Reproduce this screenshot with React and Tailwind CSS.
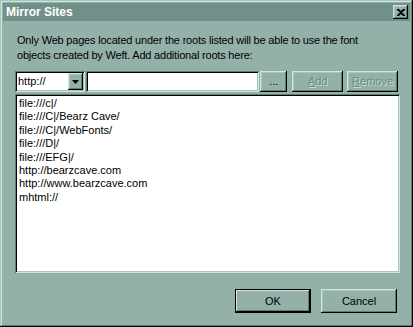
import React from 'react';

const raised = 'shadow-[inset_-1px_-1px_#000,inset_1px_1px_#d3e3de,inset_-2px_-2px_#5e7d75,inset_2px_2px_#a9c4bc]';
const sunken = 'shadow-[inset_1px_1px_#5e7d75,inset_-1px_-1px_#d3e3de,inset_2px_2px_#000,inset_-2px_-2px_#a9c4bc]';

const sites = [
    'file:///c|/',
    'file:///C|/Bearz Cave/',
    'file:///C|/WebFonts/',
    'file:///D|/',
    'file:///EFG|/',
    'http://bearzcave.com',
    'http://www.bearzcave.com',
    'mhtml://',
];

const Btn = ({ children, className = '', disabled }) => (
    <div
        className={`flex items-center justify-center bg-[#93b1a9] ${raised} ${disabled ? 'text-[#6a8a82] [text-shadow:1px_1px_#c9dcd6]' : 'text-black'} ${className}`}
    >
        {children}
    </div>
);

export default function App() {
    return (
        <div
            className="w-[413px] h-[327px] bg-[#93b1a9] flex flex-col p-[3px] shadow-[inset_-1px_-1px_#000,inset_1px_1px_#a9c4bc,inset_-2px_-2px_#5e7d75,inset_2px_2px_#d3e3de] text-[11px] text-black"
            style={{ fontFamily: '"Liberation Sans", Arial, sans-serif' }}
        >
            <div className="h-[18px] bg-[#6f9189] flex items-center justify-between pl-[3px] pr-[2px]">
                <span className="text-white font-bold text-[12px]">Mirror Sites</span>
                <div className={`w-[15px] h-[14px] flex items-center justify-center bg-[#93b1a9] ${raised}`}>
                    <svg width="8" height="7" viewBox="0 0 8 7">
                        <path d="M0 0h2l2 2 2-2h2v1L5 3.5 8 6v1H6L4 5 2 7H0V6l3-2.5L0 1z" fill="#000" />
                    </svg>
                </div>
            </div>

            <div className="flex-1 flex flex-col px-[12px] pt-[12px] pb-[11px]">
                <p className="leading-[15px] pl-[2px] tracking-[-0.2px]">
                    Only Web pages located under the roots listed will be able to use the font
                    <br />
                    objects created by Weft. Add additional roots here:
                </p>

                <div className="flex items-stretch h-[21px] mt-[8px]">
                    <div className={`w-[70px] bg-white flex items-center pl-[3px] pr-[2px] ${sunken}`}>
                        <span className="flex-1">http://</span>
                        <Btn className="w-[15px] h-[17px]">
                            <svg width="7" height="4" viewBox="0 0 7 4">
                                <path d="M0 0h7L3.5 4z" fill="#000" />
                            </svg>
                        </Btn>
                    </div>
                    <div className={`ml-[1px] w-[174px] bg-white ${sunken}`} />
                    <Btn className="ml-[1px] w-[27px] pb-[3px] items-end">...</Btn>
                    <Btn disabled className="ml-[5px] w-[51px]">
                        <span><span className="underline">A</span>dd</span>
                    </Btn>
                    <Btn disabled className="ml-[4px] w-[51px]">
                        <span><span className="underline">R</span>emove</span>
                    </Btn>
                </div>

                <div className={`mt-[2px] w-[385px] h-[179px] bg-white pl-[4px] pt-[3px] ${sunken}`}>
                    {sites.map(s => (
                        <div key={s} className="leading-[13.4px]">{s}</div>
                    ))}
                </div>

                <div className="flex justify-end gap-[10px] mt-auto pr-[1px]">
                    <Btn className="w-[76px] h-[24px] outline outline-1 outline-black outline-offset-[-1px] shadow-[inset_-2px_-2px_#000,inset_2px_2px_#d3e3de,inset_-3px_-3px_#5e7d75]">OK</Btn>
                    <Btn className="w-[76px] h-[24px]">Cancel</Btn>
                </div>
            </div>
        </div>
    );
}
